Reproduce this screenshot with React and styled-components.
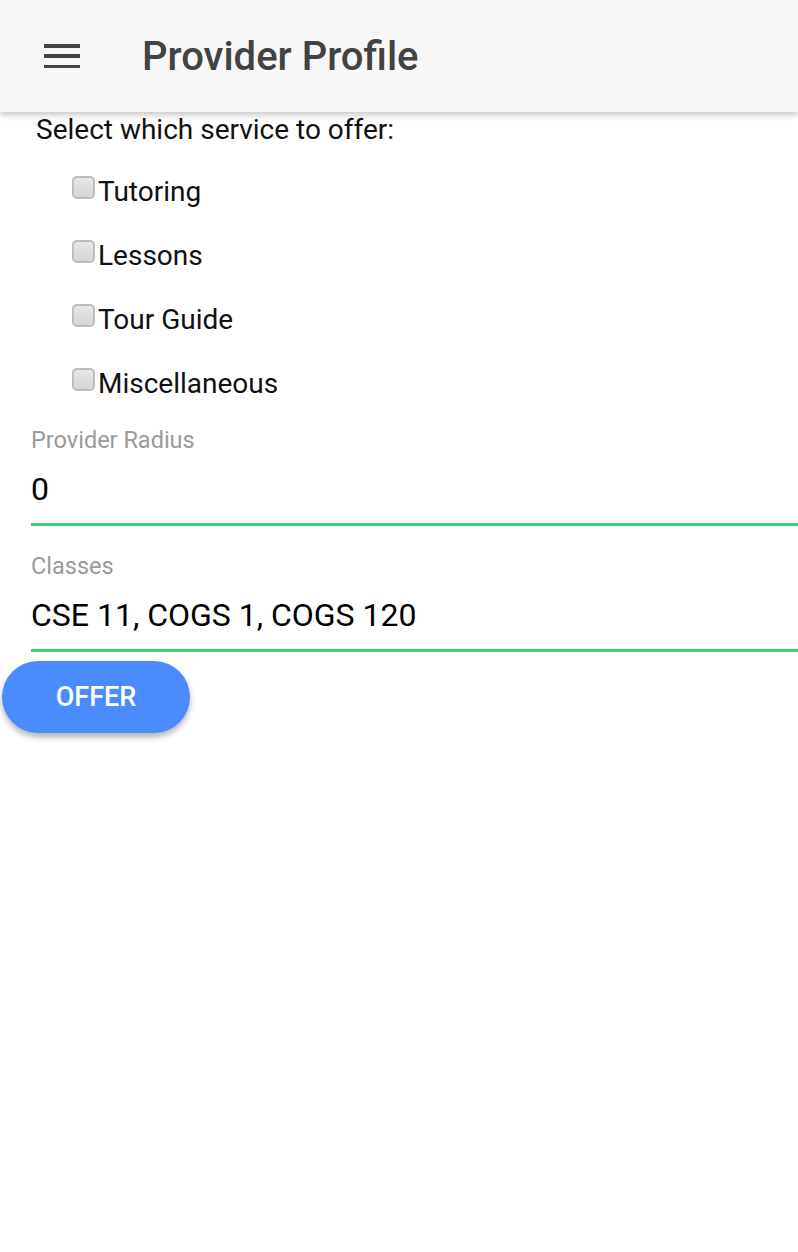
import React from "react";
import styled, { createGlobalStyle } from "styled-components";

const Global = createGlobalStyle`
  html, body { margin: 0; padding: 0; background: #ffffff; }
  body { font-family: Roboto, "Noto Sans", "Liberation Sans", sans-serif; }
  * { box-sizing: border-box; }
`;

const Page = styled.div`
  width: 798px;
  min-height: 1252px;
  background: #fff;
`;

const Header = styled.header`
  height: 112px;
  background: #f7f7f7;
  display: flex;
  align-items: center;
  padding-left: 44px;
  gap: 63px;
  box-shadow: 0 3px 6px rgba(0, 0, 0, 0.22);
  position: relative;
  z-index: 1;
`;

const Burger = styled.button`
  width: 36px;
  height: 24px;
  padding: 0;
  border: none;
  background: transparent;
  display: flex;
  flex-direction: column;
  justify-content: space-between;
  span {
    display: block;
    height: 3.5px;
    background: #444;
  }
`;

const Title = styled.h1`
  margin: 0 0 0 -1px;
  font-size: 40px;
  font-weight: 500;
  color: #424242;
`;

const Intro = styled.p`
  margin: 4px 0 0;
  padding-left: 36px;
  font-size: 28px;
  line-height: 28px;
  color: #111;
`;

const List = styled.div`
  margin-top: 16px;
  display: flex;
  flex-direction: column;
`;

const Row = styled.label`
  height: 64px;
  display: flex;
  align-items: center;
  padding-left: 72px;
  font-size: 28px;
  line-height: 32px;
  color: #111;
`;

const Box = styled.span`
  width: 23px;
  height: 23px;
  border: 2px solid #bdbdbd;
  border-radius: 5px;
  background: linear-gradient(#e6e6e6, #d6d6d6);
  margin-top: -10px;
  margin-right: 3px;
  flex: none;
`;

const Field = styled.div`
  padding-left: 31px;
  display: flex;
  flex-direction: column;
  margin-top: ${(p) => p.$top}px;
`;

const FieldLabel = styled.div`
  font-size: 23.5px;
  line-height: 26px;
  color: #9a9a9a;
`;

const FieldValue = styled.div`
  margin-top: 18px;
  font-size: 32px;
  line-height: 36px;
  color: #000;
  padding-bottom: 16px;
  border-bottom: 3px solid #35d466;
`;

const OfferButton = styled.button`
  margin: 9px 0 0 2px;
  width: 188px;
  height: 72px;
  border: none;
  border-radius: 36px;
  background: #4a8cff;
  color: #fff;
  font-family: Roboto, sans-serif;
  font-size: 27px;
  font-weight: 500;
  box-shadow: 0 4px 6px rgba(0, 0, 0, 0.3);
`;

const services = ["Tutoring", "Lessons", "Tour Guide", "Miscellaneous"];

export default function App() {
  return (
    <Page>
      <Global />
      <Header>
        <Burger aria-label="menu">
          <span />
          <span />
          <span />
        </Burger>
        <Title>Provider Profile</Title>
      </Header>
      <Intro>Select which service to offer:</Intro>
      <List>
        {services.map((s) => (
          <Row key={s}>
            <Box />
            {s}
          </Row>
        ))}
      </List>
      <Field $top={11}>
        <FieldLabel>Provider Radius</FieldLabel>
        <FieldValue>0</FieldValue>
      </Field>
      <Field $top={27}>
        <FieldLabel>Classes</FieldLabel>
        <FieldValue>CSE 11, COGS 1, COGS 120</FieldValue>
      </Field>
      <OfferButton>OFFER</OfferButton>
    </Page>
  );
}
